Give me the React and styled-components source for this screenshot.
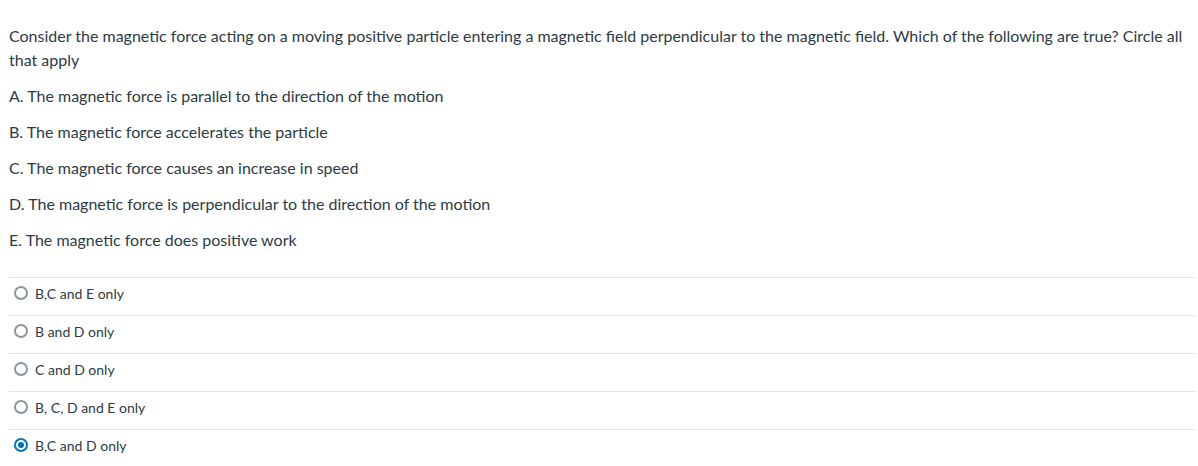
import React from 'react';
import styled, { createGlobalStyle } from 'styled-components';

const GlobalStyle = createGlobalStyle`
  html, body {
    margin: 0;
    padding: 0;
    background: #ffffff;
  }
  body {
    font-family: Lato, "Open Sans", "Liberation Sans", sans-serif;
    color: #2d3b45;
  }
`;

const Page = styled.div`
  padding: 24px 3px 0 9px;
`;

const QuestionText = styled.div`
  font-size: 16px;
  line-height: 24px;
  p {
    margin: 0 0 12px;
  }
`;

const AnswerList = styled.div`
  margin-top: 25px;
`;

const AnswerRow = styled.label`
  box-sizing: border-box;
  display: flex;
  align-items: center;
  gap: 7px;
  height: 38px;
  border-top: 1px solid #dfe2e4;
  padding: 0 0 7px 5px;
  font-size: 14px;
  cursor: pointer;
`;

const Radio = styled.span`
  box-sizing: border-box;
  width: 14px;
  height: 14px;
  border-radius: 50%;
  border: 2px solid ${({ checked }) => (checked ? '#0374b5' : '#8b969e')};
  display: flex;
  align-items: center;
  justify-content: center;
  &::after {
    content: '';
    display: ${({ checked }) => (checked ? 'block' : 'none')};
    width: 6px;
    height: 6px;
    border-radius: 50%;
    background: #0374b5;
  }
`;

const options = [
  'A. The magnetic force is parallel to the direction of the motion',
  'B. The magnetic force accelerates the particle',
  'C. The magnetic force causes an increase in speed',
  'D. The magnetic force is perpendicular to the direction of the motion',
  'E. The magnetic force does positive work',
];

const answers = [
  { text: 'B,C and E only' },
  { text: 'B and D only' },
  { text: 'C and D only' },
  { text: 'B, C, D and E only' },
  { text: 'B,C and D only', checked: true },
];

const App = () => (
  <>
    <GlobalStyle />
    <Page>
      <QuestionText>
        <p>
          Consider the magnetic force acting on a moving positive particle entering a magnetic
          field perpendicular to the magnetic field. Which of the following are true? Circle all
          that apply
        </p>
        {options.map((o) => (
          <p key={o}>{o}</p>
        ))}
      </QuestionText>
      <AnswerList>
        {answers.map((a) => (
          <AnswerRow key={a.text}>
            <Radio checked={a.checked} />
            {a.text}
          </AnswerRow>
        ))}
      </AnswerList>
    </Page>
  </>
);

export default App;
